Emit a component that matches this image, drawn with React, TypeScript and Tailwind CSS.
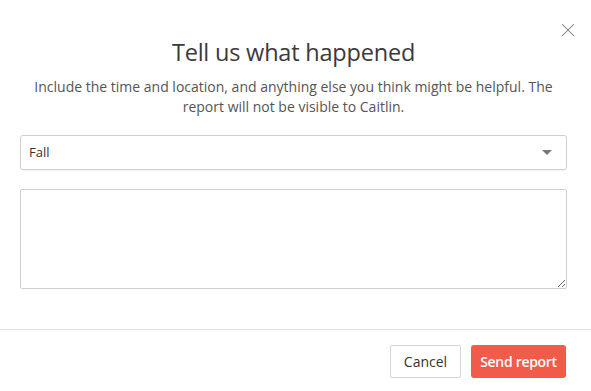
import { X } from 'lucide-react';

export default function App() {
    const font = { fontFamily: '"Open Sans", "Noto Sans", sans-serif' };

    return (
        <div className="w-[591px] h-[391px] bg-white relative text-[#333]" style={ font }>
            <button className="absolute left-[557px] top-[19px] text-[#777]">
                <X size={ 22 } strokeWidth={ 1.1 } />
            </button>
            <div className="pl-5 pr-6 pt-[36px]">
                <h2 className="text-center text-[23.5px] leading-[32px] text-[#3a3a3a] tracking-[-0.2px]">Tell us what happened</h2>
                <p className="text-center text-[14px] leading-[20px] text-[#555] mt-[9px]">
                    Include the time and location, and anything else you think might be helpful. The report will not be visible to Caitlin.
                </p>
                <div className="mt-[18px] h-[35px] border border-[#cfcfcf] rounded-[3px] flex items-center justify-between pl-2 pr-[14px] shadow-[0_1px_1px_rgba(0,0,0,0.05)]">
                    <span className="text-[13px] text-[#333]">Fall</span>
                    <span className="w-0 h-0 border-l-[5px] border-r-[5px] border-t-[5px] border-l-transparent border-r-transparent border-t-[#777]"></span>
                </div>
                <textarea className="mt-[19px] block w-full h-[100px] border border-[#cfcfcf] rounded-[2px] outline-none"></textarea>
            </div>
            <div className="mt-[40px] border-t border-[#e3e3e3] flex justify-end gap-[10px] pt-[15px] pr-[25px]">
                <button className="h-[33px] w-[71px] border border-[#d4d4d4] rounded-[2px] text-[14px] text-[#333] bg-white">Cancel</button>
                <button className="h-[33px] w-[95px] rounded-[3px] text-[14px] font-semibold tracking-[-0.3px] text-white bg-[#f25a4a]">Send report</button>
            </div>
        </div>
    )
}
